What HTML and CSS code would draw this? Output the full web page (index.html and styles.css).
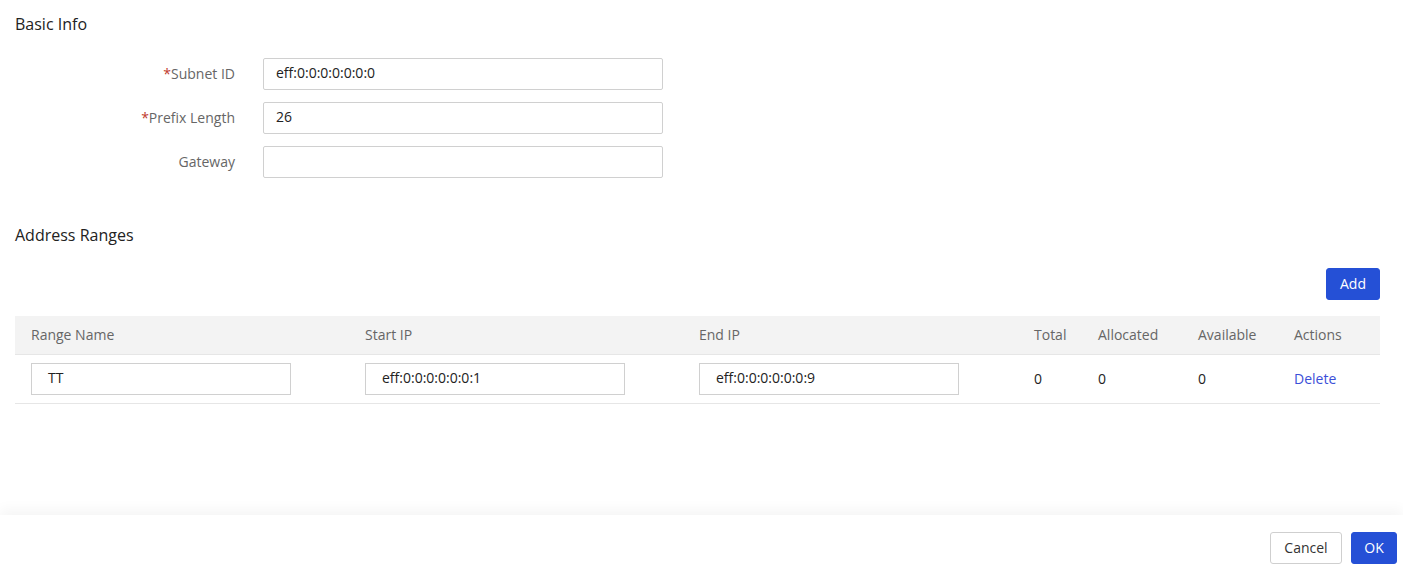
FILE: index.html
```html
<!DOCTYPE html>
<html>
<head>
<meta charset="utf-8">
<link rel="stylesheet" href="styles.css">
</head>
<body>
<div class="page">
  <div class="content">
    <h2 class="section-title">Basic Info</h2>
    <div class="form">
      <div class="form-row">
        <label class="form-label"><span class="req">*</span>Subnet ID</label>
        <div class="input">eff:0:0:0:0:0:0:0</div>
      </div>
      <div class="form-row">
        <label class="form-label"><span class="req">*</span>Prefix Length</label>
        <div class="input">26</div>
      </div>
      <div class="form-row">
        <label class="form-label">Gateway</label>
        <div class="input"></div>
      </div>
    </div>

    <h2 class="section-title ranges-title">Address Ranges</h2>
    <div class="toolbar">
      <button class="btn btn-primary">Add</button>
    </div>
    <div class="table">
      <div class="tr th">
        <div class="c c-name">Range Name</div>
        <div class="c c-start">Start IP</div>
        <div class="c c-end">End IP</div>
        <div class="c c-total">Total</div>
        <div class="c c-alloc">Allocated</div>
        <div class="c c-avail">Available</div>
        <div class="c c-act">Actions</div>
      </div>
      <div class="tr td">
        <div class="c c-name"><div class="cell-input">TT</div></div>
        <div class="c c-start"><div class="cell-input">eff:0:0:0:0:0:0:1</div></div>
        <div class="c c-end"><div class="cell-input">eff:0:0:0:0:0:0:9</div></div>
        <div class="c c-total">0</div>
        <div class="c c-alloc">0</div>
        <div class="c c-avail">0</div>
        <div class="c c-act"><a class="link">Delete</a></div>
      </div>
    </div>
  </div>
  <div class="footer">
    <button class="btn btn-default">Cancel</button>
    <button class="btn btn-primary">OK</button>
  </div>
</div>
</body>
</html>
```

FILE: styles.css
```css
* { box-sizing: border-box; }
html, body { margin: 0; padding: 0; background: #fff; }
body {
  font-family: "Open Sans", "Liberation Sans", Arial, sans-serif;
  font-size: 14px;
  color: #222;
}
.page {
  width: 1403px;
  height: 577px;
  display: flex;
  flex-direction: column;
}
.content {
  flex: 1;
  padding: 13px 23px 0 15px;
}
.section-title {
  margin: 0;
  font-size: 16px;
  font-weight: normal;
  color: #222;
  line-height: 22px;
}
.form {
  margin-top: 23px;
  display: flex;
  flex-direction: column;
  gap: 12px;
}
.form-row {
  display: flex;
  align-items: center;
}
.form-label {
  width: 248px;
  text-align: right;
  color: #666;
  padding-right: 28px;
  padding-bottom: 2px;
}
.req { color: #c0392b; }
.input {
  width: 400px;
  height: 32px;
  border: 1px solid #d0d0d0;
  border-radius: 2px;
  padding: 0 12px 1px;
  line-height: 28px;
  color: #222;
}
.ranges-title { margin-top: 46px; }
.toolbar {
  display: flex;
  justify-content: flex-end;
  margin-top: 22px;
}
.btn {
  font-family: inherit;
  font-size: 14px;
  height: 32px;
  border-radius: 3px;
  padding: 0 0 1px;
  cursor: pointer;
}
.btn-primary {
  background: #2550d6;
  color: #fff;
  border: 1px solid #2550d6;
}
.toolbar .btn { width: 54px; }
.btn-default {
  background: #fff;
  color: #333;
  border: 1px solid #cfcfcf;
  width: 72px;
}
.table { margin-top: 16px; }
.tr {
  display: flex;
  align-items: center;
  border-bottom: 1px solid #e6e6e6;
}
.th {
  background: #f3f3f3;
  height: 39px;
  color: #666;
  padding-bottom: 2px;
}
.td { height: 49px; color: #222; }
.c { padding-left: 16px; }
.td .c-total, .td .c-alloc, .td .c-avail, .td .c-act { padding-bottom: 2px; }
.c-name, .c-start { width: 334px; }
.c-end { width: 335px; }
.c-total { width: 64px; }
.c-alloc { width: 100px; }
.c-avail { width: 96px; }
.c-act { flex: 1; }
.cell-input {
  width: 260px;
  height: 32px;
  border: 1px solid #d0d0d0;
  line-height: 28px;
  padding: 0 16px 1px;
}
.link { color: #3b4fd8; }
.footer {
  height: 62px;
  display: flex;
  justify-content: flex-end;
  align-items: flex-start;
  gap: 9px;
  padding: 17px 6px 0 0;
  box-shadow: 0 -6px 12px rgba(0,0,0,0.04);
}
.footer .btn-primary { width: 46px; }
```
